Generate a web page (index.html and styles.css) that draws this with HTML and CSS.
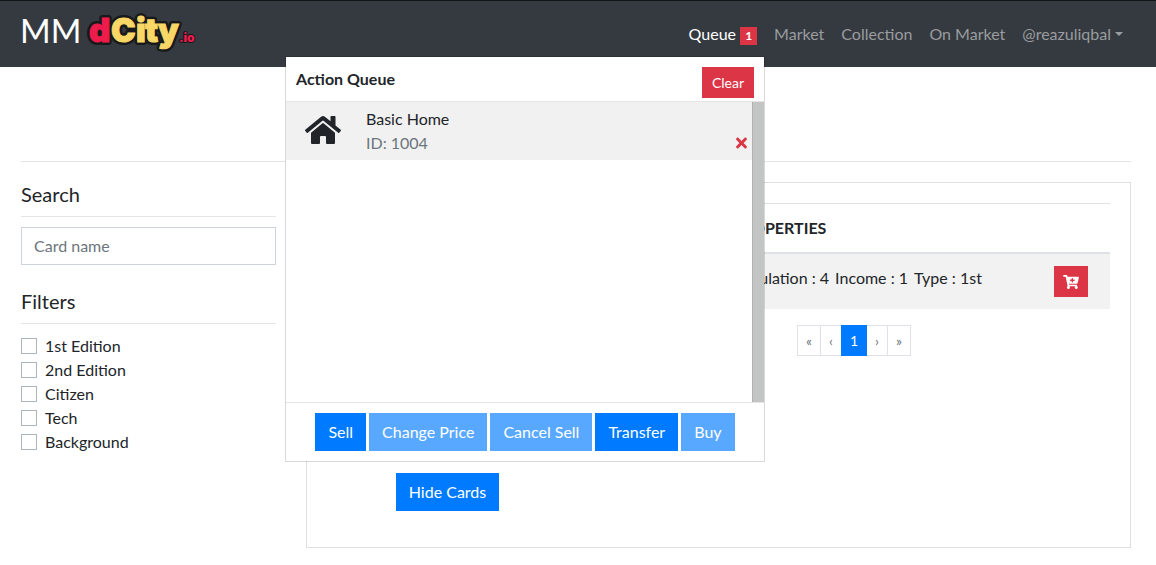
FILE: index.html
```
<!DOCTYPE html>
<html lang="en">
<head>
<meta charset="utf-8">
<title>MM dCity.io</title>
<link rel="stylesheet" href="styles.css">
</head>
<body>
<header class="navbar">
  <a class="brand" href="#">MM
    <svg class="logo" viewBox="0 0 106 44" role="img" aria-label="dCity.io">
      <g class="logo-outline">
        <text class="logo-word" y="34"><tspan x="2">d</tspan><tspan x="24">C</tspan><tspan x="49">i</tspan><tspan x="58">t</tspan><tspan x="71">y</tspan></text>
        <text class="logo-suffix" x="92" y="34">.io</text>
      </g>
      <g class="logo-fill">
        <text class="logo-word" y="34"><tspan class="logo-red" x="2">d</tspan><tspan x="24">C</tspan><tspan x="49">i</tspan><tspan x="58">t</tspan><tspan x="71">y</tspan></text>
        <text class="logo-suffix logo-red" x="92" y="34">.io</text>
      </g>
    </svg>
  </a>
  <nav class="nav">
    <a class="nav-link active" href="#">Queue <span class="badge">1</span></a>
    <a class="nav-link" href="#">Market</a>
    <a class="nav-link" href="#">Collection</a>
    <a class="nav-link" href="#">On Market</a>
    <a class="nav-link caret" href="#">@reazuliqbal</a>
  </nav>
  <section class="queue" aria-label="Action Queue">
    <div class="queue-head">
      <strong>Action Queue</strong>
      <button class="btn btn-sm btn-danger" type="button">Clear</button>
    </div>
    <div class="queue-body">
      <div class="queue-list">
        <div class="queue-item">
          <svg class="home-icon" viewBox="0 0 576 512"><path d="M280.37 148.26L96 300.11V464a16 16 0 0 0 16 16l112.06-.29a16 16 0 0 0 15.92-16V368a16 16 0 0 1 16-16h64a16 16 0 0 1 16 16v95.64a16 16 0 0 0 16 16.05L464 480a16 16 0 0 0 16-16V300L295.67 148.26a12.19 12.19 0 0 0-15.3 0zM571.6 251.47L488 182.56V44.05a12 12 0 0 0-12-12h-56a12 12 0 0 0-12 12v72.61L318.47 43a48 48 0 0 0-61 0L4.34 251.47a12 12 0 0 0-1.6 16.9l25.5 31A12 12 0 0 0 45.15 301l235.22-193.74a12.19 12.19 0 0 1 15.3 0L530.9 301a12 12 0 0 0 16.9-1.6l25.5-31a12 12 0 0 0-1.7-16.93z"/></svg>
          <div class="queue-text">
            <div>Basic Home</div>
            <div class="muted">ID: 1004</div>
          </div>
          <button class="remove" type="button" aria-label="Remove">
            <svg viewBox="0 0 352 512"><path d="M242.72 256l100.07-100.07c12.28-12.28 12.28-32.19 0-44.48l-22.24-22.24c-12.28-12.28-32.19-12.28-44.48 0L176 189.28 75.93 89.21c-12.28-12.28-32.19-12.28-44.48 0L9.21 111.45c-12.28 12.28-12.28 32.19 0 44.48L109.28 256 9.21 356.07c-12.28 12.28-12.28 32.19 0 44.48l22.24 22.24c12.28 12.28 32.2 12.28 44.48 0L176 322.72l100.07 100.07c12.28 12.28 32.2 12.28 44.48 0l22.24-22.24c12.28-12.28 12.28-32.19 0-44.48L242.72 256z"/></svg>
          </button>
        </div>
      </div>
      <div class="scroll-track"></div>
    </div>
    <div class="queue-foot">
      <button class="btn" type="button">Sell</button>
      <button class="btn" type="button" disabled>Change Price</button>
      <button class="btn" type="button" disabled>Cancel Sell</button>
      <button class="btn" type="button">Transfer</button>
      <button class="btn" type="button" disabled>Buy</button>
    </div>
  </section>
</header>

<main class="page">
  <div class="columns">
    <aside>
      <h2 class="side-title"><label for="card-name">Search</label></h2>
      <input class="text-input" id="card-name" type="text" placeholder="Card name">
      <h2 class="side-title">Filters</h2>
      <div class="filters">
        <label><input type="checkbox">1st Edition</label>
        <label><input type="checkbox">2nd Edition</label>
        <label><input type="checkbox">Citizen</label>
        <label><input type="checkbox">Tech</label>
        <label><input type="checkbox">Background</label>
      </div>
    </aside>
    <section class="card">
      <div class="preview">
        <button class="btn" type="button">Hide Cards</button>
      </div>
      <div>
        <table class="table">
          <thead><tr><th class="col-id">ID</th><th>PROPERTIES</th><th class="col-action"></th></tr></thead>
          <tbody><tr>
            <td>1004</td>
            <td><span class="prop">Population : 4</span><span class="prop">Income : 1</span><span class="prop">Type : 1st</span></td>
            <td class="col-action"><button class="btn btn-sm btn-danger btn-icon" type="button" aria-label="Add to queue">
              <svg class="cart-icon" viewBox="0 0 576 512"><path d="M504.717 320H211.572l6.545 32h268.418c15.401 0 26.816 14.301 23.403 29.319l-5.517 24.276C523.112 414.668 536 433.828 536 456c0 31.202-25.519 56.444-56.824 55.994-29.823-.429-54.35-24.631-55.155-54.447-.44-16.287 6.085-31.049 16.803-41.548H231.176C241.553 426.165 248 440.326 248 456c0 31.813-26.528 57.431-58.67 55.938-28.54-1.325-51.751-24.385-53.251-52.917-1.158-22.034 10.436-41.455 28.051-51.586L93.883 64H24C10.745 64 0 53.255 0 40V24C0 10.745 10.745 0 24 0h102.529c11.401 0 21.228 8.021 23.513 19.19L159.208 64H551.99c15.401 0 26.816 14.301 23.403 29.319l-47.273 208C525.637 312.246 515.923 320 504.717 320zM408 168h-48v-40c0-8.837-7.163-16-16-16h-16c-8.837 0-16 7.163-16 16v40h-48c-8.837 0-16 7.163-16 16v16c0 8.837 7.163 16 16 16h48v40c0 8.837 7.163 16 16 16h16c8.837 0 16-7.163 16-16v-40h48c8.837 0 16-7.163 16-16v-16c0-8.837-7.163-16-16-16z"/></svg>
            </button></td>
          </tr></tbody>
        </table>
        <nav class="pagination" aria-label="Pages">
          <button type="button" disabled>«</button>
          <button type="button" disabled>‹</button>
          <button type="button" class="current">1</button>
          <button type="button" disabled>›</button>
          <button type="button" disabled>»</button>
        </nav>
      </div>
    </section>
  </div>
</main>
</body>
</html>
```
FILE: styles.css
```
* { box-sizing: border-box; }
body {
  margin: 0;
  background: #fff;
  color: #212529;
  font: 16px/24px Lato, "Liberation Sans", sans-serif;
}
button, input { font: inherit; }

/* Navbar */
.navbar {
  position: relative;
  display: flex;
  align-items: flex-start;
  justify-content: space-between;
  height: 67px;
  padding: 6px 25px 0 20px;
  background: #343a40;
  border-top: 1px solid #121416;
}
.brand {
  display: flex;
  align-items: center;
  gap: 6px;
  color: #fff;
  font-size: 33px;
  line-height: 46px;
  text-decoration: none;
}
.logo { width: 106px; height: 44px; overflow: visible; }
.logo-word { font-family: Inter, Lato, sans-serif; font-size: 33px; font-weight: 900; }
.logo-suffix { font-family: Inter, Lato, sans-serif; font-size: 12px; font-weight: 900; }
.logo-outline { fill: #17191b; stroke: #17191b; stroke-width: 6; stroke-linejoin: round; }
.logo-outline .logo-suffix { stroke-width: 2; }
.logo-fill .logo-word { fill: #f8d766; stroke: #f8d766; stroke-width: 1; }
.logo-fill .logo-red { fill: #ee1b4b; stroke: #ee1b4b; }
.logo-fill .logo-suffix { stroke: none; }

.nav { display: flex; gap: 1px; padding-top: 7px; }
.nav-link { padding: 8px; color: #9a9c9f; text-decoration: none; }
.nav-link.active { color: #fff; }
.badge {
  display: inline-block;
  padding: 3px 5px;
  background: #dc3545;
  color: #fff;
  font-size: 12px;
  font-weight: 700;
  line-height: 12px;
}
.caret::after {
  content: "";
  display: inline-block;
  margin-left: 4px;
  vertical-align: 4px;
  border: 4px solid transparent;
  border-top-color: currentColor;
  border-bottom: 0;
}

/* Buttons */
.btn {
  padding: 6px 12px;
  border: 1px solid #007bff;
  background: #007bff;
  color: #fff;
}
.btn:disabled { opacity: .65; }
.btn-sm { padding: 4px 9px; font-size: 14px; line-height: 21px; }
.btn-danger { background: #dc3545; border-color: #dc3545; }

/* Queue drop-down */
.queue {
  position: absolute;
  top: 55px;
  right: 391px;
  z-index: 10;
  width: 480px;
  background: #fff;
  background-clip: padding-box;
  border: 1px solid rgba(0, 0, 0, .15);
}
.queue-head {
  display: flex;
  align-items: flex-start;
  justify-content: space-between;
  padding: 10px 10px 3px;
}
.queue-body {
  display: flex;
  height: 302px;
  border: solid #e5e5e5;
  border-width: 1px 0;
}
.queue-list { flex: 1; }
.queue-item {
  display: flex;
  align-items: flex-end;
  padding: 5px 4px 5px 19px;
  background: #f1f1f1;
}
.home-icon { width: 36px; height: 32px; margin-bottom: 9px; fill: #212529; }
.queue-text { flex: 1; padding-left: 25px; }
.muted { color: #6c757d; }
.remove { display: flex; padding: 4px 0; border: 0; background: none; }
.remove svg { width: 13px; height: 16px; fill: #dc3545; }
.scroll-track { width: 12px; background: #c3c5c4; border-left: 1px solid #b1b1b1; }
.queue-foot { display: flex; justify-content: center; gap: 3px; padding: 10px; }

/* Page */
.page { padding: 94px 25px 16px 21px; }
.columns {
  display: grid;
  grid-template-columns: 17fr 55fr;
  gap: 30px;
  padding-top: 20px;
  border-top: 1px solid #e5e5e5;
}
.side-title {
  margin: 0 0 10px;
  padding-bottom: 10px;
  border-bottom: 1px solid #e5e5e5;
  font-size: 20px;
  font-weight: 400;
}
.text-input {
  display: block;
  width: 100%;
  height: 38px;
  margin-bottom: 24px;
  padding: 5px 12px 7px;
  border: 1px solid #ced4da;
}
.text-input::placeholder { color: #6c757d; opacity: 1; }
.filters label { display: flex; align-items: center; gap: 8px; }
.filters input {
  appearance: none;
  width: 16px;
  height: 16px;
  margin: 0;
  border: 1px solid #adb5bd;
}
.filters input:checked { background: #007bff; }

.card {
  display: grid;
  grid-template-columns: 241fr 512fr;
  gap: 30px;
  padding: 20px;
  border: 1px solid #dfdfdf;
}
.preview {
  display: flex;
  align-items: flex-end;
  justify-content: center;
  min-height: 324px;
  padding-bottom: 16px;
}
.table { width: 100%; margin-bottom: 16px; border-collapse: separate; border-spacing: 0; }
.table th {
  padding: 12px;
  border-top: 1px solid #dee2e6;
  border-bottom: 2px solid #dee2e6;
  text-align: left;
}
.table td { padding: 12px; background: #f2f2f2; vertical-align: top; }
.table .col-id { width: 122px; }
.table .col-action { width: 78px; text-align: center; }
.prop { margin-right: 6px; }
.btn-icon { display: inline-flex; align-items: center; height: 31px; padding: 4px 8px; vertical-align: top; }
.cart-icon { width: 16px; height: 14px; fill: #fff; }

.pagination { display: flex; justify-content: center; }
.pagination button {
  padding: 4px 8px;
  border: 1px solid #dee2e6;
  background: #fff;
  color: #6c757d;
  font-size: 14px;
  line-height: 21px;
}
.pagination button + button { margin-left: -1px; }
.pagination .current { position: relative; border-color: #007bff; background: #007bff; color: #fff; }
```
